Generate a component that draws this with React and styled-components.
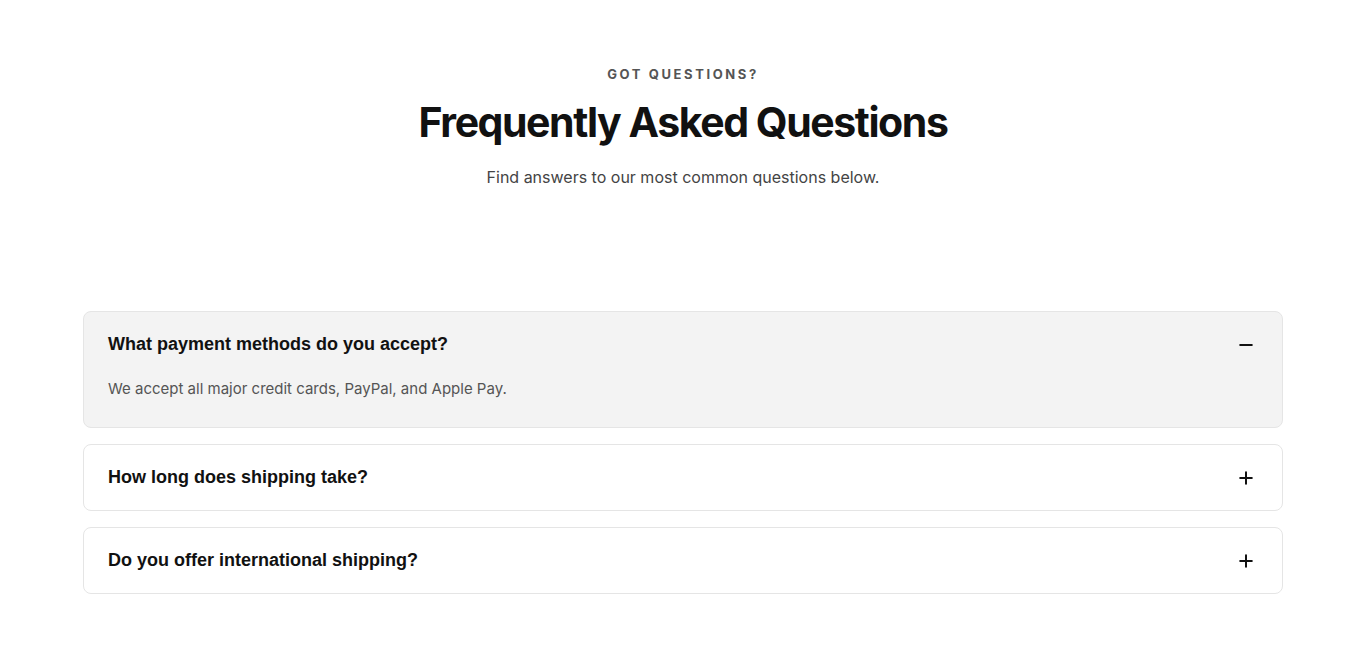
import { useState } from 'react';
import styled, { createGlobalStyle } from 'styled-components';
import { Plus, Minus } from 'lucide-react';

const faqs = [
  {
    q: 'What payment methods do you accept?',
    a: 'We accept all major credit cards, PayPal, and Apple Pay.',
  },
  {
    q: 'How long does shipping take?',
    a: 'Orders usually arrive within 3–5 business days.',
  },
  {
    q: 'Do you offer international shipping?',
    a: 'Yes, we ship to most countries worldwide.',
  },
];

function App() {
  const [open, setOpen] = useState(0);

  return (
    <>
      <GlobalStyle />
      <Section>
        <Header>
          <Eyebrow>Got questions?</Eyebrow>
          <Title>Frequently Asked Questions</Title>
          <Subtitle>Find answers to our most common questions below.</Subtitle>
        </Header>

        <List>
          {faqs.map((item, i) => {
            const isOpen = open === i;
            return (
              <Item key={item.q} $open={isOpen}>
                <Question onClick={() => setOpen(isOpen ? -1 : i)}>
                  {item.q}
                  {isOpen ? <Minus size={20} strokeWidth={2.4} /> : <Plus size={20} strokeWidth={2.4} />}
                </Question>
                {isOpen && <Answer>{item.a}</Answer>}
              </Item>
            );
          })}
        </List>
      </Section>
    </>
  );
}

export default App;

const GlobalStyle = createGlobalStyle`
  body {
    margin: 0;
    background: #ffffff;
    font-family: Inter, "Liberation Sans", sans-serif;
  }
`;

const Section = styled.section`
  padding: 66px 83px 72px;
`;

const Header = styled.div`
  display: flex;
  flex-direction: column;
  align-items: center;
  text-align: center;
`;

const Eyebrow = styled.p`
  margin: 0;
  font-size: 13px;
  font-weight: 700;
  letter-spacing: 0.2em;
  text-transform: uppercase;
  color: #555555;
  line-height: 16px;
`;

const Title = styled.h2`
  margin: 15px 0 0;
  font-size: 41px;
  font-weight: 700;
  letter-spacing: -0.035em;
  line-height: 50px;
  color: #111111;
`;

const Subtitle = styled.p`
  margin: 18px 0 0;
  font-size: 16px;
  line-height: 24px;
  color: #444444;
`;

const List = styled.div`
  margin-top: 122px;
  display: flex;
  flex-direction: column;
  gap: 16px;
`;

const Item = styled.div`
  border: 1px solid #e5e5e5;
  border-radius: 8px;
  background: ${(p) => (p.$open ? '#f3f3f3' : '#ffffff')};
`;

const Question = styled.button`
  display: flex;
  align-items: center;
  justify-content: space-between;
  width: 100%;
  height: 65px;
  padding: 0 26px 0 24px;
  border: 0;
  background: transparent;
  font-family: "Liberation Sans", Arial, sans-serif;
  font-size: 18px;
  font-weight: 700;
  color: #111111;
  text-align: left;
  cursor: pointer;

  svg {
    color: #111111;
    flex-shrink: 0;
  }
`;

const Answer = styled.p`
  margin: 0;
  padding: 0 24px 26px;
  font-size: 15px;
  line-height: 24px;
  color: #555555;
`;
